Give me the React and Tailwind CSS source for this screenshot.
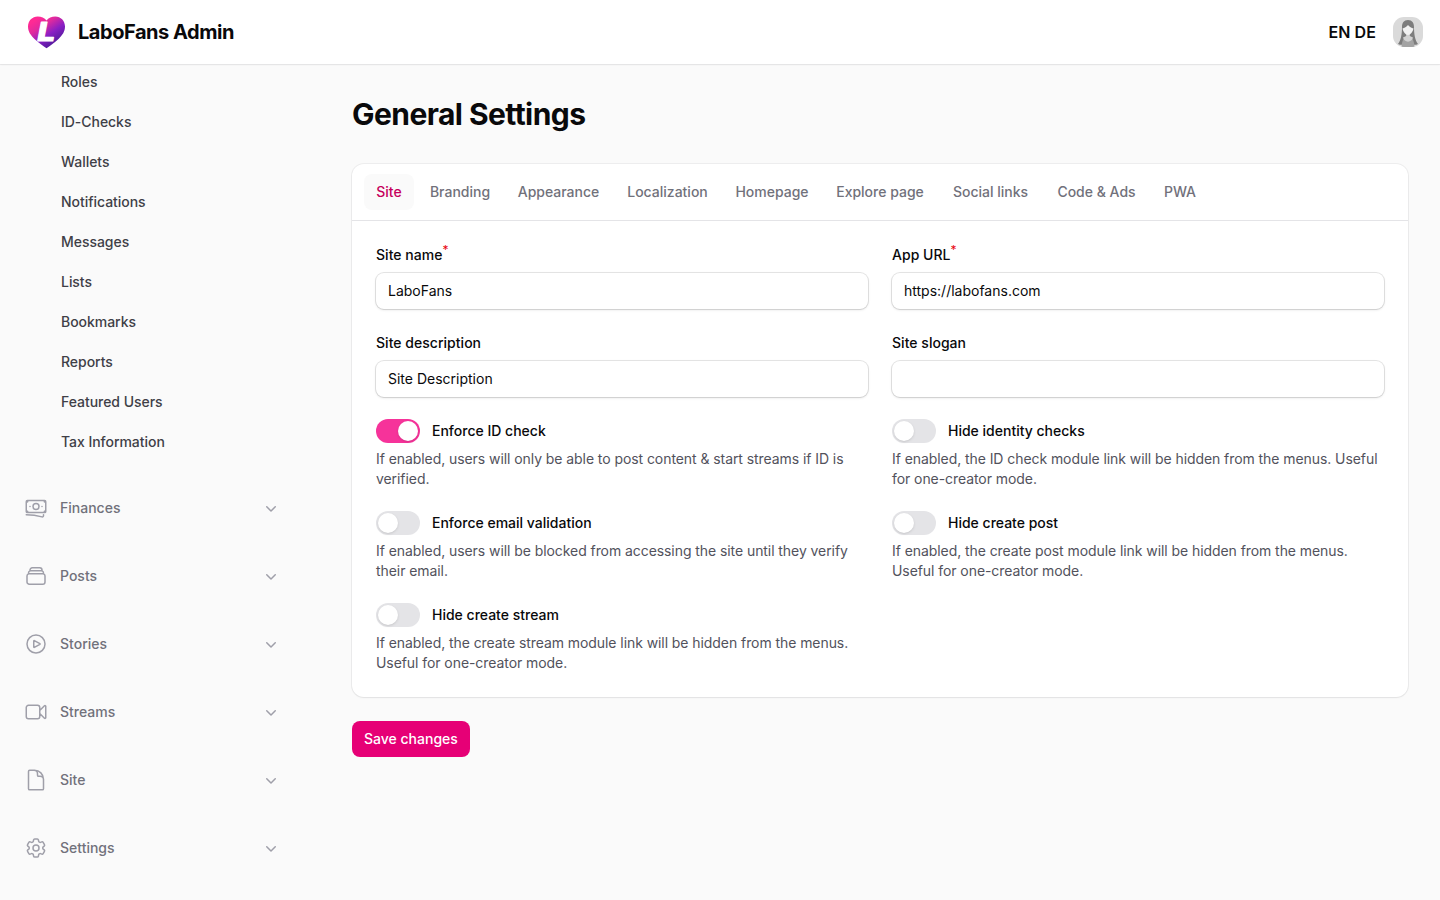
import clsx from 'clsx';
import { useState } from 'react';
import {
  HiMiniChevronDown,
  HiOutlineBanknotes,
  HiOutlineCog6Tooth,
  HiOutlineDocument,
  HiOutlinePlayCircle,
  HiOutlineRectangleStack,
  HiOutlineVideoCamera,
} from 'react-icons/hi2';

const USER_LINKS = [
  'Roles',
  'ID-Checks',
  'Wallets',
  'Notifications',
  'Messages',
  'Lists',
  'Bookmarks',
  'Reports',
  'Featured Users',
  'Tax Information',
];

const GROUPS = [
  { label: 'Finances', icon: HiOutlineBanknotes },
  { label: 'Posts', icon: HiOutlineRectangleStack },
  { label: 'Stories', icon: HiOutlinePlayCircle },
  { label: 'Streams', icon: HiOutlineVideoCamera },
  { label: 'Site', icon: HiOutlineDocument },
  { label: 'Settings', icon: HiOutlineCog6Tooth },
];

const TABS = [
  { label: 'Site', width: 'w-[50px]' },
  { label: 'Branding', width: 'w-[84px]' },
  { label: 'Appearance', width: 'w-[105px]' },
  { label: 'Localization', width: 'w-[105px]' },
  { label: 'Homepage', width: 'w-[96px]' },
  { label: 'Explore page', width: 'w-[112px]' },
  { label: 'Social links', width: 'w-[101px]' },
  { label: 'Code & Ads', width: 'w-[103px]' },
  { label: 'PWA', width: 'w-[56px]' },
];

const FIELDS = [
  { label: 'Site name', value: 'LaboFans', required: true },
  { label: 'App URL', value: 'https://labofans.com', required: true },
  { label: 'Site description', value: 'Site Description' },
  { label: 'Site slogan', value: '' },
];

const TOGGLES = [
  {
    label: 'Enforce ID check',
    help: 'If enabled, users will only be able to post content & start streams if ID is verified.',
    on: true,
  },
  {
    label: 'Hide identity checks',
    help: 'If enabled, the ID check module link will be hidden from the menus. Useful for one-creator mode.',
  },
  {
    label: 'Enforce email validation',
    help: 'If enabled, users will be blocked from accessing the site until they verify their email.',
  },
  {
    label: 'Hide create post',
    help: 'If enabled, the create post module link will be hidden from the menus. Useful for one-creator mode.',
  },
  {
    label: 'Hide create stream',
    help: 'If enabled, the create stream module link will be hidden from the menus. Useful for one-creator mode.',
  },
];

const Logo = () => (
  <svg viewBox="0 0 37 33" className="h-[33px] w-[37px]">
    <defs>
      <linearGradient id="heart" x1="0.15" y1="0.15" x2="0.7" y2="0.85">
        <stop offset="0" stopColor="#ff2a94" />
        <stop offset="0.3" stopColor="#e02a9e" />
        <stop offset="0.65" stopColor="#8a1fc4" />
        <stop offset="1" stopColor="#561ba0" />
      </linearGradient>
    </defs>
    <path
      d="M18.5 32.3C15.500 30 10.500 27 6.500 23C2.500 19 0 15.500 0 10.500C0 4.800 4.300 0.500 9.700 0.500C13.300 0.500 16.600 2 18.500 4.600C20.400 2 23.700 0.500 27.300 0.500C32.700 0.500 37 4.800 37 10.500C37 15.500 34.500 19 30.500 23C26.500 27 21.500 30 18.500 32.300Z"
      fill="url(#heart)"
    />
    <text
      x="9.500"
      y="24.500"
      textLength="17.500"
      lengthAdjust="spacingAndGlyphs"
      fill="#fff"
      stroke="#fff"
      strokeWidth="1.200"
      strokeLinejoin="round"
      className="text-[26px] font-extrabold italic"
    >
      L
    </text>
  </svg>
);

const Avatar = () => (
  <svg viewBox="0 0 30 30" className="size-[30px] rounded-[11px]">
    <rect width="30" height="30" fill="#dadada" />
    <path d="M15 3C10.800 3 9 6 9 10C9 17 8 23 5 27C7 28 9 28 11 27.500H19C21 28 23 28 25 27C22 23 21 17 21 10C21 6 19.200 3 15 3Z" fill="#7d7d7d" />
    <path d="M8.500 30C9 24 10.500 20.500 13 20H17C19.500 20.500 21 24 21.500 30Z" fill="#a3a3a3" />
    <path d="M10 20.500C11 26 19 26 20 20.500L16.800 19V16H13.200V19Z" fill="#d2d2d2" />
    <path d="M15 8C13.500 10 11.500 11 9.500 11.500C10.300 15 12.500 18 15 18C17.500 18 19.700 15 20.500 11.500C18.500 11 16.500 10 15 8Z" fill="#f1f1f1" />
  </svg>
);

const Field = ({ label, value, required }) => (
  <label className="flex flex-col gap-2">
    <span className="text-sm leading-5 font-medium tracking-[0.03px]">
      {label}
      {required && <sup className="text-xs font-normal text-red-600">*</sup>}
    </span>
    <input
      defaultValue={value}
      className="h-9 w-full rounded-lg bg-white px-3 pb-0.5 text-sm shadow-sm ring-1 ring-zinc-950/10 outline-none focus:ring-2 focus:ring-pink-600"
    />
  </label>
);

const Toggle = ({ label, help, on = false }) => {
  const [checked, setChecked] = useState(on);

  return (
    <div className="flex flex-col gap-2">
      <div className="flex h-5 items-center gap-3">
        <button
          role="switch"
          aria-checked={checked}
          aria-label={label}
          onClick={() => setChecked((c) => !c)}
          className={clsx('h-6 w-11 shrink-0 rounded-full p-0.5', checked ? 'bg-[#f6339a]' : 'bg-zinc-200')}
        >
          <span className={clsx('block size-5 rounded-full bg-white shadow-sm', checked && 'translate-x-5')} />
        </button>
        <span className="text-sm leading-5 font-medium">{label}</span>
      </div>
      <p className="text-sm leading-5 tracking-[-0.07px] text-zinc-600">{help}</p>
    </div>
  );
};

export default function App() {
  const [activeTab, setActiveTab] = useState('Site');

  return (
    <div className="flex h-screen flex-col overflow-hidden bg-zinc-50 font-['Inter',sans-serif] text-zinc-950">
      <header className="z-10 flex h-16 shrink-0 items-center justify-between bg-white pr-[17px] pl-7 shadow-xs ring-1 ring-zinc-950/5">
        <div className="flex items-center gap-[13px]">
          <Logo />
          <span className="text-xl font-bold tracking-[-0.46px]">LaboFans Admin</span>
        </div>
        <div className="flex items-center gap-[17px]">
          <span className="text-base font-semibold tracking-[0.1px]">EN DE</span>
          <Avatar />
        </div>
      </header>

      <div className="flex min-h-0 flex-1">
        <aside className="flex w-80 shrink-0 flex-col gap-7 overflow-hidden pr-[39px] pl-6">
          <ul className="flex flex-col gap-1">
            {USER_LINKS.map((link) => (
              <li
                key={link}
                className="flex h-9 items-center pl-[37px] text-sm font-medium tracking-[-0.04px] text-zinc-700"
              >
                {link}
              </li>
            ))}
          </ul>
          {GROUPS.map(({ label, icon: Icon }) => (
            <button key={label} className="flex h-10 shrink-0 items-center gap-3 text-left">
              <Icon className="size-6 text-zinc-400" />
              <span className="flex-1 text-sm font-medium text-zinc-500">{label}</span>
              <HiMiniChevronDown className="size-5 text-zinc-400" />
            </button>
          ))}
        </aside>

        <main className="flex-1 px-8 py-8">
          <h1 className="text-3xl leading-9 font-bold tracking-[-0.56px]">General Settings</h1>

          <section className="mt-8 rounded-xl bg-white shadow-xs ring-1 ring-zinc-950/5">
            <nav className="flex gap-1 border-b border-zinc-200 px-3 py-2.5">
              {TABS.map(({ label, width }) => (
                <button
                  key={label}
                  onClick={() => setActiveTab(label)}
                  className={clsx(
                    'h-9 rounded-lg text-center text-sm font-medium whitespace-nowrap',
                    width,
                    label === activeTab ? 'bg-zinc-50 text-[#c6005c]' : 'text-zinc-500',
                  )}
                >
                  {label}
                </button>
              ))}
            </nav>
            <div className="grid grid-cols-2 gap-6 p-6">
              {FIELDS.map((field) => (
                <Field key={field.label} {...field} />
              ))}
              {TOGGLES.map((toggle) => (
                <Toggle key={toggle.label} {...toggle} />
              ))}
            </div>
          </section>

          <button className="mt-6 h-9 rounded-lg bg-[#e60076] px-3 text-sm font-medium text-white">Save changes</button>
        </main>
      </div>
    </div>
  );
}
